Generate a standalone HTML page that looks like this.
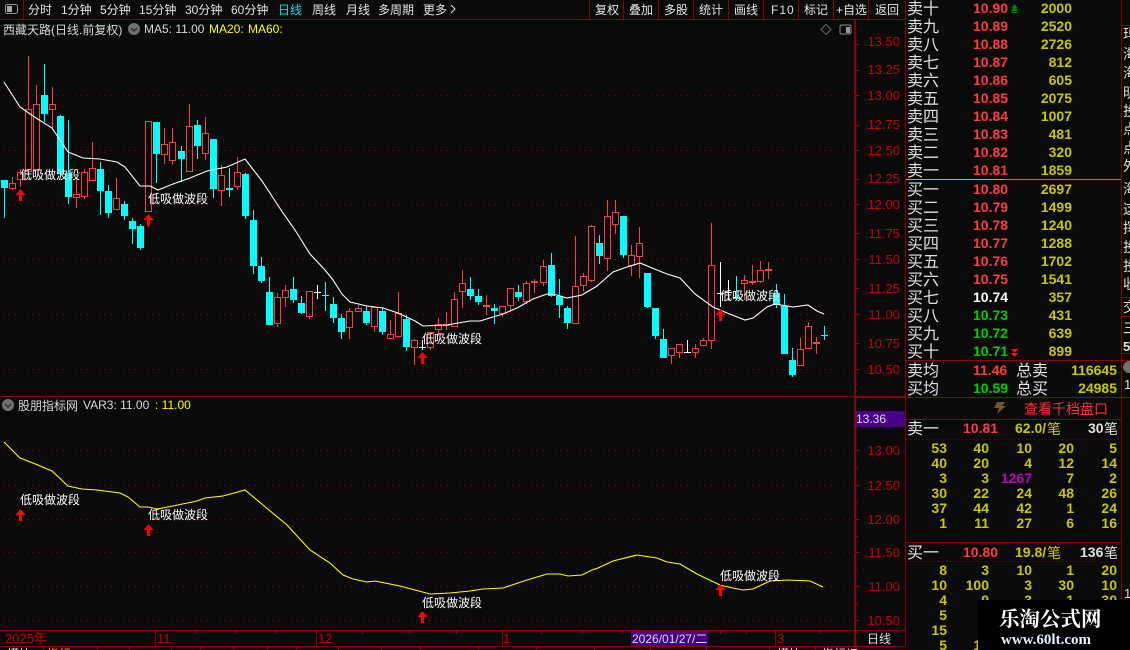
<!DOCTYPE html>
<html><head><meta charset="utf-8"><style>
html,body{margin:0;padding:0;background:#0a0a0a;width:1130px;height:650px;overflow:hidden}
svg{display:block}
text{font-family:"Liberation Sans","WenQuanYi Zen Hei","Noto Sans CJK SC",sans-serif;font-size:12px;fill:#d8d8d8;white-space:pre}
.ax text{fill:#c80000;font-size:13px;text-anchor:end}
.ob text{font-size:16px;fill:#e0e0e0}
.pr text{font-size:14px;font-weight:bold;fill:#ff3c3c}
.vo text{font-size:14px;font-weight:bold;fill:#c8c800;text-anchor:end}
.gd text{font-size:14px;font-weight:bold;fill:#c8c800;text-anchor:end}
.tb text{font-size:12px;fill:#e4e4e4}
.mk text{font-size:12px;fill:#fff}
.rs text{font-size:14px;fill:#ddd}
</style></head><body>
<svg width="1130" height="650" viewBox="0 0 1130 650" xmlns="http://www.w3.org/2000/svg">
<rect width="1130" height="650" fill="#0a0a0a"/>

<!-- grid -->
<g stroke="#7c0808" stroke-width="1" stroke-dasharray="1 5" shape-rendering="crispEdges">
<path d="M3 95.5H853M3 150.5H853M3 204.5H853M3 259.5H853M3 314.5H853M3 369.5H853"/>
<path d="M3 450.5H853M3 485.5H853M3 519.5H853M3 552.5H853M3 586.5H853M3 620.5H853"/>
</g>

<!-- frame lines -->
<g stroke="#8a0000" fill="none" shape-rendering="crispEdges">
<path d="M0 19.5H905M23.5 0V19M589.5 0V19M623.5 0V19M658.5 0V19M693.5 0V19M728.5 0V19M763.5 0V19M798.5 0V19M833.5 0V19M868.5 0V19M905.5 0V646"/>
<path d="M854.5 19V646M855.5 19V646"/>
<path d="M0 396.5H905M0 630.5H905M0 646.5H905M856 397.5H905"/>
<path d="M855 44.5H860M855 70.5H860M855 95.5H860M855 125.5H860M855 150.5H860M855 179.5H860M855 204.5H860M855 233.5H860M855 259.5H860M855 288.5H860M855 314.5H860M855 343.5H860M855 369.5H860"/>
<path d="M855 450.5H860M855 467.5H858M855 485.5H860M855 502.5H858M855 519.5H860M855 536.5H858M855 552.5H860M855 569.5H858M855 586.5H860M855 603.5H858M855 620.5H860"/>
<path d="M155.5 631V646M316.5 631V646M502.5 631V646M775.5 631V646M195.5 631V634M236.5 631V634M276.5 631V634M362.5 631V634M409.5 631V634M456.5 631V634M541.5 631V634M582.5 631V634M622.5 631V634M720.5 631V634M746.5 631V634M820.5 631V634"/>
<path d="M43.5 646V650M97.5 646V650M129.5 646V650M171.5 646V650M200.5 646V650M233.5 646V650M267.5 646V650M296.5 646V650M338.5 646V650M381.5 646V650M420.5 646V650M478.5 646V650M536.5 646V650M594.5 646V650M650.5 646V650M706.5 646V650M769.5 646V650M815.5 646V650"/>
</g>
<rect x="856" y="411" width="49" height="16" fill="#47008a"/>

<!-- red candles -->
<path shape-rendering="crispEdges" fill="none" stroke="#ff3c3c" d="
M9.5 183.5h6v5h-6zM12.5 177V183M12.5 189V190
M17.5 172.5h6v7h-6zM20.5 169V172M20.5 180V187
M25.5 109.5h6v62h-6zM28.5 56V109
M33.5 104.5h6v65h-6zM36.5 85V104
M49.5 104.5h6v5h-6zM52.5 87V104M52.5 110V130
M73.5 194.5h6v3h-6zM76.5 177V194M76.5 198V208
M81.5 172.5h6v24h-6zM84.5 169V172M84.5 197V199
M89.5 168.5h6v12h-6zM92.5 142V168
M113.5 198.5h6v11h-6zM116.5 178V198
M145.5 121.5h6v90h-6z
M161.5 144.5h6v10h-6zM164.5 128V144M164.5 155V164
M169.5 142.5h6v18h-6zM172.5 128V142M172.5 161V165
M186.5 126.5h6v45h-6zM189.5 104V126
M202.5 133.5h6v20h-6zM205.5 117V133M205.5 154V160
M218.5 175.5h6v15h-6zM221.5 165V175M221.5 191V206
M234.5 172.5h6v14h-6zM237.5 157V172M237.5 187V190
M274.5 297.5h6v26h-6zM277.5 293V297M277.5 324V327
M282.5 290.5h6v7h-6zM285.5 285V290M285.5 298V307
M306.5 291.5h6v25h-6zM309.5 317V319
M346.5 311.5h6v16h-6zM349.5 308V311M349.5 328V339
M355.5 308.5h6v3h-6zM358.5 305V308
M371.5 307.5h6v19h-6zM374.5 327V332
M387.5 334.5h6v4h-6zM390.5 320V334
M395.5 313.5h6v23h-6zM398.5 292V313
M411.5 340.5h6v7h-6zM414.5 339V340M414.5 348V365
M427.5 332.5h6v15h-6zM430.5 348V350
M435.5 324.5h6v5h-6zM438.5 318V324M438.5 330V336
M443.5 324.5h6v1h-6zM446.5 312V324M446.5 326V330
M451.5 299.5h6v27h-6zM454.5 292V299
M459.5 283.5h6v8h-6zM462.5 270V283M462.5 292V308
M483.5 305.5h6v1h-6zM486.5 295V305M486.5 307V315
M499.5 306.5h6v7h-6zM502.5 314V317
M507.5 288.5h6v17h-6zM510.5 306V311
M523.5 283.5h6v18h-6zM526.5 281V283M526.5 302V304
M531.5 281.5h6v1h-6zM534.5 279V281M534.5 283V293
M540.5 266.5h6v16h-6zM543.5 260V266M543.5 283V286
M572.5 286.5h6v37h-6zM575.5 236V286
M580.5 276.5h6v9h-6zM583.5 273V276M583.5 286V291
M588.5 226.5h6v54h-6zM591.5 225V226M591.5 281V282
M604.5 216.5h6v42h-6zM607.5 200V216M607.5 259V271
M612.5 212.5h6v12h-6zM615.5 200V212M615.5 225V234
M628.5 255.5h6v10h-6zM631.5 245V255M631.5 266V276
M636.5 243.5h6v13h-6zM639.5 227V243M639.5 257V278
M668.5 348.5h6v7h-6zM671.5 356V364
M676.5 344.5h6v8h-6zM679.5 353V358
M692.5 348.5h6v4h-6zM695.5 344V348M695.5 353V358
M700.5 340.5h6v5h-6zM703.5 338V340
M708.5 265.5h6v75h-6zM711.5 223V265M711.5 341V349
M741.5 280.5h6v3h-6zM744.5 275V280M744.5 284V300
M749.5 281.5h6v1h-6zM752.5 265V281M752.5 283V285
M757.5 270.5h6v11h-6zM760.5 261V270M760.5 282V283
M765.5 269.5h6v1h-6zM768.5 262V269M768.5 271V279
M797.5 349.5h6v16h-6zM800.5 338V349
M805.5 326.5h6v22h-6zM808.5 322V326
M813.5 342.5h6v1h-6zM816.5 337V342M816.5 344V354"/>

<!-- cyan candles -->
<g fill="#00ffff" shape-rendering="crispEdges">
<rect x="1" y="180" width="7" height="8"/><rect x="41" y="95" width="7" height="19"/><rect x="57" y="116" width="7" height="58"/><rect x="65" y="173" width="7" height="24"/><rect x="97" y="169" width="7" height="22"/><rect x="105" y="191" width="7" height="22"/><rect x="121" y="204" width="7" height="12"/><rect x="129" y="221" width="7" height="8"/><rect x="137" y="226" width="7" height="22"/><rect x="153" y="122" width="7" height="32"/><rect x="178" y="151" width="7" height="8"/><rect x="194" y="125" width="7" height="21"/><rect x="210" y="139" width="7" height="50"/><rect x="226" y="188" width="7" height="2"/><rect x="242" y="174" width="7" height="42"/><rect x="250" y="220" width="7" height="46"/><rect x="258" y="266" width="7" height="15"/><rect x="266" y="292" width="7" height="33"/><rect x="290" y="289" width="7" height="11"/><rect x="298" y="303" width="7" height="10"/><rect x="322" y="295" width="7" height="1"/><rect x="330" y="304" width="7" height="14"/><rect x="338" y="318" width="7" height="14"/><rect x="363" y="311" width="7" height="12"/><rect x="379" y="311" width="7" height="21"/><rect x="403" y="319" width="7" height="28"/><rect x="467" y="289" width="7" height="7"/><rect x="475" y="296" width="7" height="6"/><rect x="491" y="308" width="7" height="3"/><rect x="515" y="292" width="7" height="5"/><rect x="548" y="265" width="7" height="31"/><rect x="556" y="296" width="7" height="9"/><rect x="564" y="308" width="7" height="15"/><rect x="596" y="243" width="7" height="13"/><rect x="620" y="216" width="7" height="39"/><rect x="644" y="273" width="7" height="34"/><rect x="652" y="308" width="7" height="28"/><rect x="660" y="339" width="7" height="19"/><rect x="733" y="297" width="7" height="2"/><rect x="773" y="293" width="7" height="12"/><rect x="781" y="306" width="7" height="48"/><rect x="789" y="360" width="7" height="15"/><rect x="821" y="335" width="7" height="1"/>
</g>
<path shape-rendering="crispEdges" fill="none" stroke="#00ffff" d="M4.5 188V218M44.5 64V122M60.5 115V174M68.5 120V204M100.5 162V215M108.5 185V218M124.5 201V220M132.5 218V244M140.5 224V250M156.5 154V183M181.5 146V182M197.5 120V159M213.5 189V198M229.5 168V197M245.5 173V219M253.5 210V274M261.5 257V283M269.5 277V292M293.5 277V303M301.5 296V314M325.5 282V311M333.5 297V323M341.5 314V339M366.5 306V325M382.5 307V335M406.5 315V351M470.5 277V300M478.5 289V305M494.5 304V324M518.5 285V301M551.5 253V297M559.5 279V318M567.5 306V329M599.5 235V264M623.5 255V258M647.5 307V308M655.5 336V339M663.5 329V339M736.5 276V300M776.5 284V308M784.5 294V306M792.5 348V377M824.5 326V340"/>

<!-- white dojis -->
<path shape-rendering="crispEdges" fill="none" stroke="#fff" d="M317.5 285V299M314 292.5H321M422.5 340V350M419 347.5H426M687.5 340V353M684 352.5H691M720.5 262V307M717 293.5H724M728.5 280V300M725 292.5H732"/>

<!-- MA line -->
<polyline fill="none" stroke="#fff" stroke-width="1.1" points="4,82 20,107 33,116 52,128 68,152 83,158 100,159 117,162 125,167 140,186 150,186 158,190 173,184 190,178 207,171 227,167 245,159 262,181 283,213 295,230 310,254 325,270 333,280 342,294 350,302 367,306 383,308 398,313 415,321 423,326 447,325 458,323 470,321 480,321 493,317 503,314 517,308 533,299 547,294 557,295 567,298 582,295 597,286 613,272 627,267 640,263 657,270 667,274 680,278 695,294 713,307 727,313 745,320 753,318 767,307 775,304 793,307 808,305 817,311 824,314"/>

<!-- VAR3 line -->
<polyline fill="none" stroke="#ffff00" stroke-width="1.1" points="4,442 20,458 33,463 52,471 68,486 82,489 97,490 120,493 128,497 140,507 148,507 157,509 173,506 197,501 205,498 223,496 245,490 263,505 287,525 310,550 330,563 343,575 353,579 367,582 375,581 400,586 430,594 450,593 470,591 483,589 503,588 527,580 547,574 560,574 568,576 582,575 592,570 598,568 613,561 637,555 657,558 667,562 680,564 697,574 720,585 733,588 743,590 753,589 770,581 788,580 810,581 823,587"/>

<!-- arrows -->
<path fill="#ff0000" shape-rendering="crispEdges" d="M20.5 189l5 6h-3.500v6h-3v-6h-3.500zM148.500 214l5 6h-3.500v6h-3v-6h-3.500zM422.500 352l5 6h-3.500v6h-3v-6h-3.500zM720.500 309l5 6h-3.500v6h-3v-6h-3.500zM20.500 509l5 6h-3.500v6h-3v-6h-3.500zM148.500 524l5 6h-3.500v6h-3v-6h-3.500zM422.500 611l5 6h-3.500v6h-3v-6h-3.500zM720.500 584l5 6h-3.500v6h-3v-6h-3.500z"/>

<!-- marks -->
<g class="mk">
<text x="20" y="179">低吸做波段</text><text x="148" y="203">低吸做波段</text><text x="422" y="343">低吸做波段</text><text x="720" y="300">低吸做波段</text>
<text x="20" y="504">低吸做波段</text><text x="148" y="519">低吸做波段</text><text x="422" y="607">低吸做波段</text><text x="720" y="580">低吸做波段</text>
</g>

<!-- toolbar -->
<rect x="5.500" y="4.500" width="12" height="9" rx="2" fill="none" stroke="#999"/><rect x="7" y="6" width="5" height="6" fill="#aaa"/>
<g class="tb">
<text x="28" y="14">分时</text><text x="61" y="14">1分钟</text><text x="100" y="14">5分钟</text><text x="139" y="14">15分钟</text><text x="185" y="14">30分钟</text><text x="231" y="14">60分钟</text><text x="278" y="14" style="fill:#00e6e6">日线</text><text x="312" y="14">周线</text><text x="346" y="14">月线</text><text x="378" y="14">多周期</text><text x="423" y="14">更多</text>
<text x="595" y="14">复权</text><text x="629" y="14">叠加</text><text x="664" y="14">多股</text><text x="699" y="14">统计</text><text x="734" y="14">画线</text><text x="771" y="14" style="letter-spacing:1px">F10</text><text x="804" y="14">标记</text><text x="836" y="14">+自选</text><text x="875" y="14">返回</text>
</g>
<path d="M451 5l4 4-4 4" fill="none" stroke="#ddd"/>

<!-- header row -->
<text x="3" y="34">西藏天路(日线.前复权)</text>
<circle cx="134" cy="29" r="6" fill="#707070"/><path d="M131 28l3 3 3-3" fill="none" stroke="#222" stroke-width="1.200"/>
<text x="144" y="33">MA5: 11.00</text><text x="209" y="33" style="fill:#ffff00">MA20:</text><text x="248" y="33" style="fill:#ffff00">MA60:</text>
<path d="M826 24.500l5 5-5 5-5-5z" fill="none" stroke="#666"/>
<rect x="840" y="25" width="11" height="9" rx="1.500" fill="none" stroke="#888"/><rect x="846" y="27" width="4" height="6" fill="#999"/>

<!-- indicator header -->
<circle cx="8" cy="405" r="6" fill="#707070"/><path d="M5 404l3 3 3-3" fill="none" stroke="#222" stroke-width="1.200"/>
<text x="18" y="410">股朋指标网</text><text x="83" y="409">VAR3: 11.00</text><text x="155" y="409" style="fill:#ffff00">: 11.00</text>

<!-- axis labels -->
<g class="ax">
<text x="900" y="46">13.50</text><text x="900" y="74">13.25</text><text x="900" y="100">13.00</text><text x="900" y="129">12.75</text><text x="900" y="155">12.50</text><text x="900" y="183">12.25</text><text x="900" y="209">12.00</text><text x="900" y="238">11.75</text><text x="900" y="264">11.50</text><text x="900" y="293">11.25</text><text x="900" y="319">11.00</text><text x="900" y="348">10.75</text><text x="900" y="374">10.50</text>
<text x="900" y="455">13.00</text><text x="900" y="490">12.50</text><text x="900" y="524">12.00</text><text x="900" y="557">11.50</text><text x="900" y="591">11.00</text><text x="900" y="625">10.50</text>
</g>
<text x="856" y="423" style="font-size:12px;fill:#ddd">13.36</text>

<!-- time axis -->
<text x="5" y="643" style="fill:#c80000;font-size:13px">2025年</text><text x="157" y="643" style="fill:#c80000;font-size:13px">11</text><text x="318" y="643" style="fill:#c80000;font-size:13px">12</text><text x="503" y="643" style="fill:#c80000;font-size:13px">1</text><text x="777" y="643" style="fill:#c80000;font-size:13px">3</text>
<rect x="631" y="631" width="77" height="15" fill="#47008a"/>
<text x="632" y="643" style="font-size:12px;fill:#ddd">2026/01/27/二</text>
<text x="867" y="643" style="font-size:12px;fill:#ddd">日线</text>

<!-- clipped bottom row -->
<svg x="0" y="647" width="905" height="3" viewBox="0 647 905 3">
<text x="7" y="658" style="fill:#e0e0e0">模块</text><text x="47" y="658" style="fill:#c8c800">指标</text><text x="86" y="658" style="fill:#c8c800">一</text><text x="106" y="658" style="fill:#e0e0e0">一</text><text x="777" y="658" style="fill:#e0e0e0">模块</text><text x="822" y="658" style="fill:#e0e0e0">指标切</text>
</svg>

<!-- right panel lines -->
<g stroke="#8a0000" fill="none" shape-rendering="crispEdges">
<path d="M1121 25.500H1130M1121 297.500H1130M1121 316.500H1130M906 360.500H1130M906 397.500H1130M906 419.500H1121M906 542.500H1121M1121 353.500H1130"/>
</g>
<rect x="1121" y="0" width="1" height="650" fill="#8a0000"/>
<path d="M906 179.500H1004" stroke="#d8a050" shape-rendering="crispEdges"/><path d="M1004 179.500H1121" stroke="#4a8fc8" shape-rendering="crispEdges"/>
<path d="M906 439.500H1121M906 561.500H1121" stroke="#7c0808" stroke-dasharray="1 3" shape-rendering="crispEdges"/>

<!-- order book labels -->
<g class="ob">
<text x="907" y="14">卖十</text><text x="907" y="32">卖九</text><text x="907" y="50">卖八</text><text x="907" y="68">卖七</text><text x="907" y="86">卖六</text><text x="907" y="104">卖五</text><text x="907" y="122">卖四</text><text x="907" y="140">卖三</text><text x="907" y="158">卖二</text><text x="907" y="176">卖一</text>
<text x="907" y="195">买一</text><text x="907" y="213">买二</text><text x="907" y="231">买三</text><text x="907" y="249">买四</text><text x="907" y="267">买五</text><text x="907" y="285">买六</text><text x="907" y="303">买七</text><text x="907" y="321">买八</text><text x="907" y="339">买九</text><text x="907" y="357">买十</text>
<text x="907" y="376">卖均</text><text x="907" y="394">买均</text>
<text x="1016" y="376">总卖</text><text x="1016" y="394">总买</text>
<text x="907" y="434">卖一</text><text x="907" y="558">买一</text>
</g>
<g class="pr">
<text x="973" y="13">10.90</text><text x="973" y="31">10.89</text><text x="973" y="49">10.88</text><text x="973" y="67">10.87</text><text x="973" y="85">10.86</text><text x="973" y="103">10.85</text><text x="973" y="121">10.84</text><text x="973" y="139">10.83</text><text x="973" y="157">10.82</text><text x="973" y="175">10.81</text>
<text x="973" y="194">10.80</text><text x="973" y="212">10.79</text><text x="973" y="230">10.78</text><text x="973" y="248">10.77</text><text x="973" y="266">10.76</text><text x="973" y="284">10.75</text>
<text x="973" y="302" style="fill:#fff">10.74</text><text x="973" y="320" style="fill:#00d000">10.73</text><text x="973" y="338" style="fill:#00d000">10.72</text><text x="973" y="356" style="fill:#00d000">10.71</text>
<text x="973" y="375">11.46</text><text x="973" y="393" style="fill:#00d000">10.59</text>
<text x="963" y="433">10.81</text><text x="963" y="557">10.80</text>
</g>
<g class="vo">
<text x="1072" y="13">2000</text><text x="1072" y="31">2520</text><text x="1072" y="49">2726</text><text x="1072" y="67">812</text><text x="1072" y="85">605</text><text x="1072" y="103">2075</text><text x="1072" y="121">1007</text><text x="1072" y="139">481</text><text x="1072" y="157">320</text><text x="1072" y="175">1859</text>
<text x="1072" y="194">2697</text><text x="1072" y="212">1499</text><text x="1072" y="230">1240</text><text x="1072" y="248">1288</text><text x="1072" y="266">1702</text><text x="1072" y="284">1541</text><text x="1072" y="302">357</text><text x="1072" y="320">431</text><text x="1072" y="338">639</text><text x="1072" y="356">899</text>
<text x="1117" y="375">116645</text><text x="1117" y="393">24985</text>
</g>
<path d="M1014.500 4l3 4h-1.500l2 3h-7l2-3h-1.500zM1011 12h7v1h-7z" fill="#008000" shape-rendering="crispEdges"/>
<path d="M1011 349h7l-3.500 4zM1011 353h7l-3.500 4z" fill="#ff1010" shape-rendering="crispEdges"/>

<!-- lightning + link -->
<path d="M997 402h8l-3 4h4l-9 8 2-6h-5z" fill="#6e5a28"/>
<text x="1024" y="414" style="font-size:14px;fill:#ff3030">查看千档盘口</text>

<!-- detail headers -->
<text x="1015" y="433" style="font-size:14px;font-weight:bold;fill:#c8c800">62.0/</text><text x="1047" y="434" style="font-size:14px;fill:#c8c800">笔</text>
<text x="1088" y="433" style="font-size:14px;font-weight:bold;fill:#e0e0e0">30</text><text x="1104" y="434" style="font-size:14px;fill:#e0e0e0">笔</text>
<text x="1015" y="557" style="font-size:14px;font-weight:bold;fill:#c8c800">19.8/</text><text x="1047" y="558" style="font-size:14px;fill:#c8c800">笔</text>
<text x="1080" y="557" style="font-size:14px;font-weight:bold;fill:#e0e0e0">136</text><text x="1104" y="558" style="font-size:14px;fill:#e0e0e0">笔</text>

<g class="gd">
<text x="947" y="453">53</text><text x="989" y="453">40</text><text x="1032" y="453">10</text><text x="1074" y="453">20</text><text x="1117" y="453">5</text>
<text x="947" y="468">40</text><text x="989" y="468">20</text><text x="1032" y="468">4</text><text x="1074" y="468">12</text><text x="1117" y="468">14</text>
<text x="947" y="483">3</text><text x="989" y="483">3</text><text x="1032" y="483" style="fill:#c000c0">1267</text><text x="1074" y="483">7</text><text x="1117" y="483">2</text>
<text x="947" y="498">30</text><text x="989" y="498">22</text><text x="1032" y="498">24</text><text x="1074" y="498">48</text><text x="1117" y="498">26</text>
<text x="947" y="513">37</text><text x="989" y="513">44</text><text x="1032" y="513">42</text><text x="1074" y="513">1</text><text x="1117" y="513">24</text>
<text x="947" y="528">1</text><text x="989" y="528">11</text><text x="1032" y="528">27</text><text x="1074" y="528">6</text><text x="1117" y="528">16</text>
<text x="947" y="575">8</text><text x="989" y="575">3</text><text x="1032" y="575">10</text><text x="1074" y="575">1</text><text x="1117" y="575">20</text>
<text x="947" y="590">10</text><text x="989" y="590">100</text><text x="1032" y="590">3</text><text x="1074" y="590">30</text><text x="1117" y="590">10</text>
<text x="947" y="605">4</text><text x="989" y="605">9</text><text x="1032" y="605">3</text><text x="1074" y="605">1</text><text x="1117" y="605">30</text>
<text x="947" y="620">5</text><text x="947" y="635">15</text><text x="947" y="650">5</text><text x="989" y="650">10</text>
</g>

<!-- right strip text -->
<svg x="1122" y="26" width="8" height="624" viewBox="1122 26 8 624">
<g class="rs">
<text x="1123" y="39">玛</text><text x="1123" y="59">海</text><text x="1123" y="78">海</text><text x="1123" y="98">明</text><text x="1123" y="116">投</text><text x="1123" y="134">点</text><text x="1123" y="153">点</text><text x="1123" y="171">外</text><text x="1123" y="194">海</text><text x="1123" y="214">这</text><text x="1123" y="233">挥</text><text x="1123" y="252">投</text><text x="1123" y="271">投</text><text x="1123" y="289">收</text><text x="1123" y="312">交</text><text x="1123" y="333">三</text>
<text x="1123" y="351" style="font-weight:bold;font-size:13px">5</text><text x="1124" y="389" style="font-size:13px">1</text><text x="1124" y="598" style="font-size:13px">1</text>
</g>
<circle cx="1129" cy="367" r="6" fill="#707070"/>
</svg>

<!-- watermark -->
<rect x="978" y="600" width="152" height="50" fill="#000"/>
<text x="999" y="626" style="font-family:'Noto Serif CJK SC','Liberation Serif',serif;font-size:20.500px;font-weight:bold;fill:#fff">乐淘公式网</text>
<text x="1001" y="644" style="font-family:'Liberation Serif',serif;font-size:15px;font-weight:bold;fill:#e4f0ff">www.60lt.com</text>
</svg>
</body></html>
